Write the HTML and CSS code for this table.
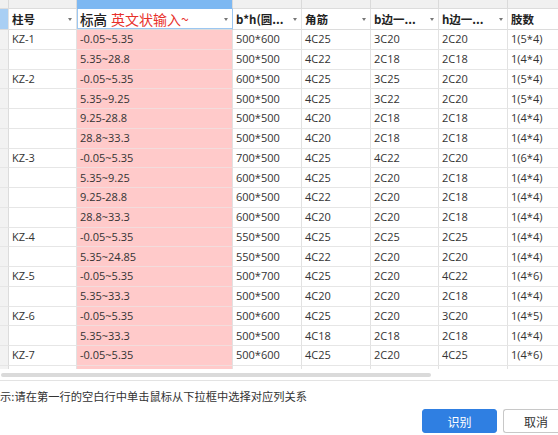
FILE: index.html
```html
<!DOCTYPE html>
<html lang="zh-CN">
<head>
<meta charset="utf-8">
<title>识别</title>
<link rel="stylesheet" href="styles.css">
</head>
<body>
<div class="grid-wrap">
  <div class="row band">
    <div class="c"></div><div class="c"></div><div class="c sel"></div><div class="c"></div><div class="c"></div><div class="c"></div><div class="c"></div><div class="c"></div>
  </div>
  <div class="row head">
    <div class="c corner"></div>
    <div class="c"><span>柱号</span><i class="arr"></i></div>
    <div class="c edit"><span class="bg">标高</span><span class="ime">英文状输入~</span><i class="arr"></i></div>
    <div class="c"><span>b*h(圆...</span><i class="arr"></i></div>
    <div class="c"><span>角筋</span><i class="arr"></i></div>
    <div class="c"><span>b边一...</span><i class="arr"></i></div>
    <div class="c"><span>h边一...</span><i class="arr"></i></div>
    <div class="c"><span>肢数</span></div>
  </div>
  <div class="row"><div class="c l"></div><div class="c">KZ-1</div><div class="c p">-0.05~5.35</div><div class="c">500*600</div><div class="c">4C25</div><div class="c">3C20</div><div class="c">2C20</div><div class="c">1(5*4)</div></div>
  <div class="row"><div class="c l"></div><div class="c"></div><div class="c p">5.35~28.8</div><div class="c">500*500</div><div class="c">4C22</div><div class="c">2C18</div><div class="c">2C18</div><div class="c">1(4*4)</div></div>
  <div class="row"><div class="c l"></div><div class="c">KZ-2</div><div class="c p">-0.05~5.35</div><div class="c">600*500</div><div class="c">4C25</div><div class="c">3C25</div><div class="c">2C20</div><div class="c">1(5*4)</div></div>
  <div class="row"><div class="c l"></div><div class="c"></div><div class="c p">5.35~9.25</div><div class="c">500*500</div><div class="c">4C25</div><div class="c">3C22</div><div class="c">2C20</div><div class="c">1(5*4)</div></div>
  <div class="row"><div class="c l"></div><div class="c"></div><div class="c p">9.25-28.8</div><div class="c">500*500</div><div class="c">4C20</div><div class="c">2C18</div><div class="c">2C18</div><div class="c">1(4*4)</div></div>
  <div class="row"><div class="c l"></div><div class="c"></div><div class="c p">28.8~33.3</div><div class="c">500*500</div><div class="c">4C20</div><div class="c">2C18</div><div class="c">2C18</div><div class="c">1(4*4)</div></div>
  <div class="row"><div class="c l"></div><div class="c">KZ-3</div><div class="c p">-0.05~5.35</div><div class="c">700*500</div><div class="c">4C25</div><div class="c">4C22</div><div class="c">2C20</div><div class="c">1(6*4)</div></div>
  <div class="row"><div class="c l"></div><div class="c"></div><div class="c p">5.35~9.25</div><div class="c">600*500</div><div class="c">4C25</div><div class="c">2C20</div><div class="c">2C18</div><div class="c">1(4*4)</div></div>
  <div class="row"><div class="c l"></div><div class="c"></div><div class="c p">9.25-28.8</div><div class="c">600*500</div><div class="c">4C22</div><div class="c">2C20</div><div class="c">2C18</div><div class="c">1(4*4)</div></div>
  <div class="row"><div class="c l"></div><div class="c"></div><div class="c p">28.8~33.3</div><div class="c">600*500</div><div class="c">4C20</div><div class="c">2C20</div><div class="c">2C18</div><div class="c">1(4*4)</div></div>
  <div class="row"><div class="c l"></div><div class="c">KZ-4</div><div class="c p">-0.05~5.35</div><div class="c">550*500</div><div class="c">4C25</div><div class="c">2C25</div><div class="c">2C25</div><div class="c">1(4*4)</div></div>
  <div class="row"><div class="c l"></div><div class="c"></div><div class="c p">5.35~24.85</div><div class="c">550*500</div><div class="c">4C22</div><div class="c">2C20</div><div class="c">2C20</div><div class="c">1(4*4)</div></div>
  <div class="row"><div class="c l"></div><div class="c">KZ-5</div><div class="c p">-0.05~5.35</div><div class="c">500*700</div><div class="c">4C25</div><div class="c">2C20</div><div class="c">4C22</div><div class="c">1(4*6)</div></div>
  <div class="row"><div class="c l"></div><div class="c"></div><div class="c p">5.35~33.3</div><div class="c">500*500</div><div class="c">4C20</div><div class="c">2C20</div><div class="c">2C18</div><div class="c">1(4*4)</div></div>
  <div class="row"><div class="c l"></div><div class="c">KZ-6</div><div class="c p">-0.05~5.35</div><div class="c">500*600</div><div class="c">4C25</div><div class="c">2C20</div><div class="c">3C20</div><div class="c">1(4*5)</div></div>
  <div class="row"><div class="c l"></div><div class="c"></div><div class="c p">5.35~33.3</div><div class="c">500*500</div><div class="c">4C18</div><div class="c">2C18</div><div class="c">2C18</div><div class="c">1(4*4)</div></div>
  <div class="row"><div class="c l"></div><div class="c">KZ-7</div><div class="c p">-0.05~5.35</div><div class="c">500*600</div><div class="c">4C25</div><div class="c">2C20</div><div class="c">4C25</div><div class="c">1(4*6)</div></div>
  <div class="row"><div class="c l"></div><div class="c"></div><div class="c p"></div><div class="c"></div><div class="c"></div><div class="c"></div><div class="c"></div><div class="c"></div></div>
</div>
<div class="hscroll"><div class="thumb"></div></div>
<div class="footer">
  <p class="hint">示:请在第一行的空白行中单击鼠标从下拉框中选择对应列关系</p>
  <div class="buttons">
    <button class="btn primary">识别</button>
    <button class="btn cancel">取消</button>
  </div>
</div>
</body>
</html>
```

FILE: styles.css
```css
* {
  box-sizing: border-box;
  margin: 0;
  padding: 0;
}

html, body {
  width: 558px;
  height: 435px;
  overflow: hidden;
  background: #fff;
}

body {
  font-family: "Open Sans", "Noto Sans CJK SC", sans-serif;
  color: #333;
  font-size: 11px;
}

.grid-wrap {
  height: 369px;
  overflow: hidden;
  width: 558px;
}

.row {
  display: grid;
  grid-template-columns: 9px 68px 156px 69px 69px 68px 69px 50px;
  width: 558px;
  height: 19.75px;
}

.c {
  border-right: 1px solid #e2e2e2;
  border-bottom: 1px solid #e6e6e6;
  display: flex;
  align-items: center;
  padding-left: 3px;
  white-space: nowrap;
  overflow: hidden;
  line-height: 14px;
}

.c:last-child {
  border-right: none;
}

.c.l {
  background: #f2f2f2;
  border-right-color: #dcdcdc;
  padding: 0;
}

.c.p {
  background: #ffcaca;
  border-bottom-color: #f2dcdc;
}

.row.band {
  height: 9px;
}

.band .c {
  background: #f0f0f0;
  border-right-color: #dadada;
  border-bottom-color: #dcdcdc;
}

.band .c.sel {
  background: #7db8f2;
  border-bottom-color: #7db8f2;
}

.row.head {
  height: 21px;
}

.head .c {
  font-family: "Noto Sans CJK SC", sans-serif;
  font-weight: 700;
  font-size: 11.5px;
  color: #222;
  justify-content: space-between;
  padding-right: 4px;
  border-bottom-color: #dcdcdc;
}

.head .c.corner {
  background: #a9cff4;
  padding: 0;
}

.head .c.edit {
  justify-content: flex-start;
  box-shadow: inset 1px 0 0 #9cc7f1, inset 0 -1px 0 #9cc7f1;
  border-right-color: #9cc7f1;
}

.edit .bg {
  font-size: 13.5px;
  font-weight: 500;
}

.edit .ime {
  color: #e8312b;
  font-weight: 400;
  font-size: 14px;
  margin-left: 4px;
  flex: 1;
}

.arr {
  display: block;
  width: 0;
  height: 0;
  border-left: 2.5px solid transparent;
  border-right: 2.5px solid transparent;
  border-top: 3px solid #777;
  flex: none;
}

.hscroll {
  height: 12px;
  padding-top: 4px;
  border-bottom: 1px solid #e3e3e3;
}

.thumb {
  width: 430px;
  height: 4px;
  margin-left: 1px;
  border-radius: 2px;
  background: #dadada;
}

.footer {
  padding-top: 7px;
}

.hint {
  font-family: "Noto Sans CJK SC", sans-serif;
  font-size: 11.25px;
  line-height: 16px;
  color: #333;
  white-space: nowrap;
}

.buttons {
  display: flex;
  gap: 6px;
  margin-top: 5px;
  padding-left: 422px;
  width: 558px;
  overflow: hidden;
}

.btn {
  flex: none;
  width: 75px;
  height: 24px;
  border-radius: 3px;
  border: 1px solid #c8c8c8;
  background: #fff;
  color: #333;
  font-family: "Noto Sans CJK SC", sans-serif;
  font-size: 12px;
}

.btn.cancel {
  width: 55px;
  border-right: none;
  border-top-right-radius: 0;
  border-bottom-right-radius: 0;
  padding-left: 20px;
  text-align: left;
}

.btn.primary {
  background: #2f7fe2;
  border-color: #2f7fe2;
  color: #fff;
}
```
